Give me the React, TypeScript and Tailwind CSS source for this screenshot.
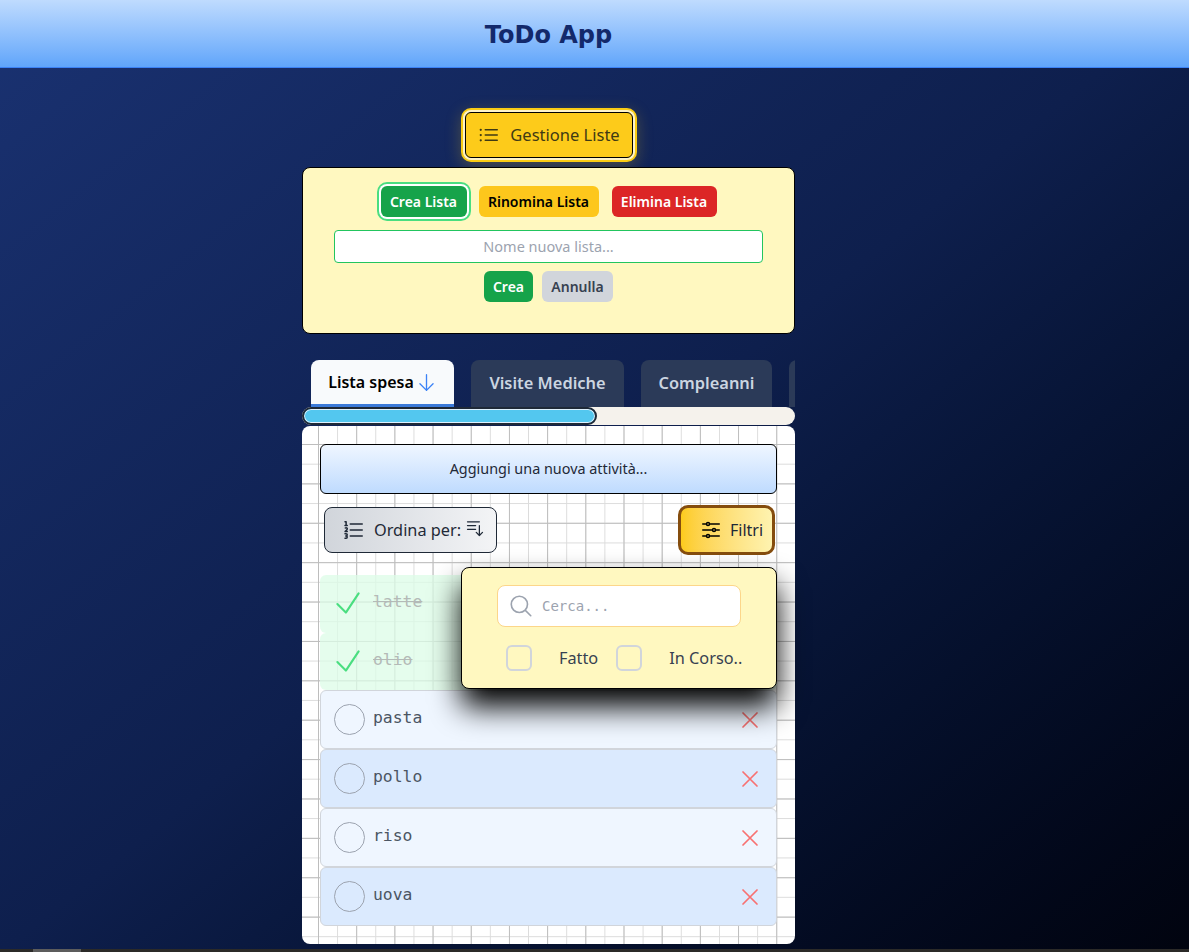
import {
  HiOutlineListBullet,
  HiOutlineNumberedList,
  HiOutlineBarsArrowDown,
  HiOutlineAdjustmentsHorizontal,
  HiOutlineMagnifyingGlass,
  HiOutlineXMark,
  HiOutlineCheck,
  HiOutlineArrowDown,
} from 'react-icons/hi2';

const DONE_TASKS = ['latte', 'olio'];
const OPEN_TASKS = ['pasta', 'pollo', 'riso', 'uova'];

export default function App() {
  return (
    <div className="h-[952px] overflow-hidden flex flex-col bg-linear-to-br from-[#1a3272] via-[#0e1f4d] to-[#01040f] font-['Noto_Sans',sans-serif]">
      <header className="h-[68px] shrink-0 w-full bg-linear-to-b from-[#bfdbfe] to-[#60a5fa] border-b border-[#3b82f6]">
        <div className="w-[1097px] h-full pt-[2px] flex items-center justify-center">
          <h1 className="text-2xl font-bold text-[#13296b] font-['DejaVu_Sans',sans-serif]">ToDo App</h1>
        </div>
      </header>

      <main className="w-[1097px] flex-1 flex flex-col items-center">
        <button className="mt-11 w-[168px] h-[46px] flex items-center justify-center gap-[9px] rounded-md border border-black bg-[#fdcb1a] text-[#3f3a14] text-[16.5px] shadow-[0_0_0_2px_#fef3c7,0_0_0_4px_#facc15,0_4px_16px_4px_rgba(250,204,21,0.25)]">
          <HiOutlineListBullet className="w-6 h-6" />
          Gestione Liste
        </button>

        {/* Pannello gestione */}
        <section className="mt-[9px] w-[493px] h-[167px] rounded-lg border border-black bg-[#fff8c0] flex flex-col items-center pt-[18px]">
          <div className="flex items-center gap-3 h-[31px]">
            <button className="h-[31px] w-[86px] rounded-md bg-[#16a34a] text-white text-sm font-semibold shadow-[0_0_0_2px_#ffffff,0_0_0_4px_#4ade80]">Crea Lista</button>
            <button className="h-[31px] w-[120px] rounded-md bg-[#fdc71c] text-black text-sm font-semibold">Rinomina Lista</button>
            <button className="h-[31px] w-[105px] ml-px rounded-md bg-[#dc2626] text-white text-sm font-semibold">Elimina Lista</button>
          </div>
          <input
            placeholder="Nome nuova lista..."
            className="mt-[13px] w-[429px] h-[33px] pb-[2px] rounded border border-[#22c55e] bg-white text-center text-[14.5px] placeholder:text-[#9ca3af] outline-none"
          />
          <div className="mt-2 flex gap-[9px]">
            <button className="h-[31px] w-[49px] pt-px rounded-md bg-[#16a34a] text-white text-sm font-semibold">Crea</button>
            <button className="h-[31px] w-[71px] pt-px rounded-md bg-[#d1d5db] text-[#374151] text-sm font-semibold">Annulla</button>
          </div>
        </section>

        {/* Tab liste */}
        <div className="mt-[26px] w-[493px] pl-[9px] h-[47px] flex gap-[17px] overflow-hidden">
          <div className="shrink-0 w-[143px] flex items-center justify-center gap-[2px] rounded-t-lg bg-[#f8fafc] border-b-[3px] border-[#3b7ad9] text-black text-[16px] font-semibold">
            Lista spesa <HiOutlineArrowDown className="w-[21px] h-[21px] text-[#3b82f6]" />
          </div>
          <div className="shrink-0 w-[153px] flex items-center justify-center rounded-t-lg bg-[#2b3a58] text-[#cbd5e1] text-[16.4px] font-semibold">Visite Mediche</div>
          <div className="shrink-0 w-[131px] flex items-center justify-center rounded-t-lg bg-[#2b3a58] text-[#cbd5e1] text-[16.4px] font-semibold">Compleanni</div>
          <div className="shrink-0 w-[120px] rounded-t-lg bg-[#2b3a58]" />
        </div>

        <div className="w-[493px] h-[18px] rounded-full bg-[#f5f2ec]">
          <div className="w-[295px] h-full rounded-full bg-[#53c7ef] border-2 border-[#1f2937] shadow-[inset_0_0_0_1px_#e0f2fe]" />
        </div>

        {/* Card attivita */}
        <section className="relative mt-[1px] w-[493px] h-[518px] rounded-lg pl-[18px] pr-[18px] pt-[18px] bg-white bg-[linear-gradient(to_right,#bdbdbd_1px,transparent_1px),linear-gradient(to_bottom,#bdbdbd_1px,transparent_1px),linear-gradient(to_right,#dcdcdc_1px,transparent_1px),linear-gradient(to_bottom,#dcdcdc_1px,transparent_1px)] bg-size-[38.2px_39.4px,38.2px_39.4px,19.1px_19.7px,19.1px_19.7px] bg-position-[16px_18px,16px_18px,16px_18px,16px_18px]">
          <div className="h-[50px] rounded-md border border-black bg-linear-to-b from-[#eff6ff] to-[#bfdbfe] flex items-center justify-center text-[14.4px] text-[#1f2937]">
            Aggiungi una nuova attività...
          </div>

          <div className="mt-[11px] h-[50px] flex items-center justify-between pl-1 pr-[2px]">
            <button className="w-[173px] h-[46px] rounded-lg border border-[#1f2937] bg-linear-to-r from-[#d1d5db] to-[#f3f4f6] flex items-center pl-[17px] text-[#1f2937] text-[16.3px]">
              <HiOutlineNumberedList className="w-6 h-6 mr-2" />
              Ordina per:
              <HiOutlineBarsArrowDown className="w-5 h-5 ml-1 -mt-1" />
            </button>
            <button className="w-[97px] h-[50px] rounded-[10px] border-[3px] border-[#854d0e] bg-linear-to-r from-[#fdcb1a] to-[#fef3b0] flex items-center pl-[18px] text-[#1f2937] text-[16px]">
              <HiOutlineAdjustmentsHorizontal className="w-6 h-6 mr-[7px] text-black" />
              Filtri
            </button>
          </div>

          <ul className="mt-5">
            {DONE_TASKS.map((name) => (
              <li key={name} className="h-[57.5px] w-[457px] rounded-md bg-[#dcfce7]/75 flex items-start pl-[11px] pt-[11px]">
                <HiOutlineCheck className="w-[34px] h-[34px] text-[#4ade80]" />
                <span className="ml-2 mt-[4px] text-[16.4px] text-[#b4bab7] line-through font-['DejaVu_Sans_Mono',monospace]">{name}</span>
              </li>
            ))}
            {OPEN_TASKS.map((name, i) => (
              <li
                key={name}
                className={`h-[59px] w-[457px] rounded-md border border-[#d1d5db] flex items-center pl-[13px] pr-3 ${i % 2 === 0 ? 'bg-[#eff6ff]' : 'bg-[#dbeafe]'}`}
              >
                <span className="w-[31px] h-[31px] rounded-full border border-[#9ca3af] shrink-0" />
                <span className="ml-2 -mt-[3px] flex-1 text-[16.4px] text-[#4b5563] font-['DejaVu_Sans_Mono',monospace]">{name}</span>
                <HiOutlineXMark className="w-7 h-7 text-[#f87171]" />
              </li>
            ))}
          </ul>

          {/* Popup filtri */}
          <div className="absolute left-[159px] top-[141px] w-[316px] h-[122px] rounded-lg border border-black bg-[#fff8c0] shadow-[0_18px_30px_0_#000] flex flex-col items-center pt-[17px]">
            <div className="w-[244px] h-[42px] shrink-0 rounded-lg border border-[#fcd68a] bg-white flex items-center pl-[10px] gap-2">
              <HiOutlineMagnifyingGlass className="w-[26px] h-[26px] text-[#9ca3af]" />
              <span className="text-sm text-[#9ca3af] font-['DejaVu_Sans_Mono',monospace]">Cerca...</span>
            </div>
            <div className="mt-[18px] w-[244px] flex items-center pl-[9px] text-[16.3px] text-[#374151] whitespace-nowrap">
              <span className="w-[26px] h-[26px] shrink-0 rounded-md border-2 border-[#d1d5db]" />
              <span className="ml-[27px]">Fatto</span>
              <span className="ml-[18px] w-[26px] h-[26px] shrink-0 rounded-md border-2 border-[#d1d5db]" />
              <span className="ml-[27px]">In Corso..</span>
            </div>
          </div>
        </section>
      </main>

      <div className="h-[3px] shrink-0 bg-[#2b2a28] pl-[33px]">
        <div className="w-[48px] h-full bg-[#5c5c5c]" />
      </div>
    </div>
  );
}
